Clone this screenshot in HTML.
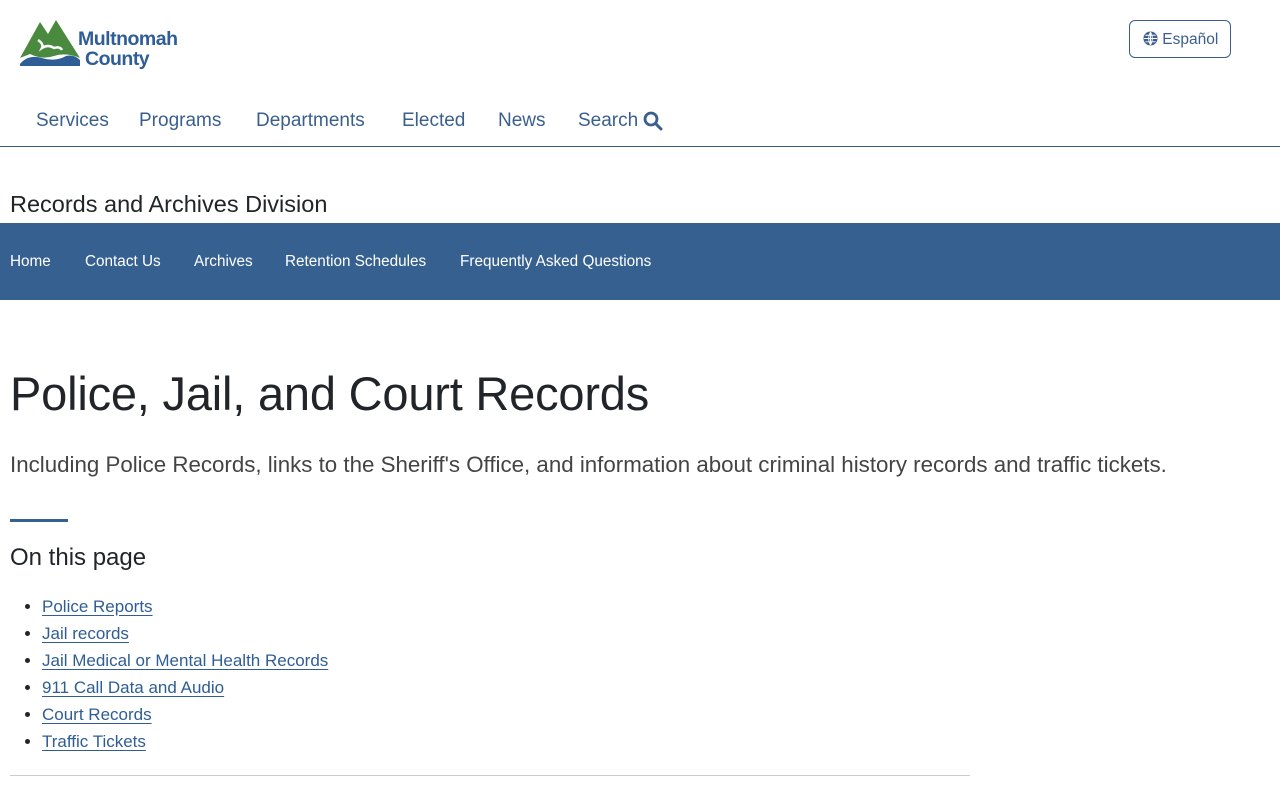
<!DOCTYPE html>
<html><head><meta charset="utf-8"><style>
*{margin:0;padding:0;box-sizing:border-box}
body{width:1280px;height:800px;overflow:hidden;background:#fff;font-family:"Liberation Sans",sans-serif;color:#212529;position:relative}
.abs{position:absolute;white-space:nowrap}
.nav a{position:absolute;top:110px;font-size:19px;line-height:22px;color:#3a5f8f;text-decoration:none;display:flex;align-items:center;gap:5px}
.bar{position:absolute;left:0;top:223px;width:1280px;height:77px;background:#356090}
.bar span{position:absolute;top:30px;color:#fff;font-size:15.3px}
ul{position:absolute;left:42px;top:597px;list-style:disc}
li{height:27px;font-size:17px}
li a{color:#2f5d95;text-decoration:underline;text-underline-offset:3px}
li::marker{color:#212529}
</style></head><body>
<svg class="abs" style="left:18px;top:18px" width="66" height="50" viewBox="0 0 66 50">
<path d="M2 40 L22 4 L30 16 L38 2 L62 40 Q48 34 36 38 Q24 42 12 36 Z" fill="#4a8a3f"/>
<path d="M20 22 Q26 26 24 30 Q30 26 36 30 Q42 28 44 32" stroke="#fff" stroke-width="2.5" fill="none"/>
<path d="M2 46 Q10 36 24 40 Q38 44 48 38 Q56 36 62 42 L62 48 L2 48 Z" fill="#2f5d95"/>
</svg>
<div class="abs" style="left:78px;top:29px;font-size:19.5px;font-weight:bold;color:#2f5d95;letter-spacing:-0.5px;line-height:20px">Multnomah</div>
<div class="abs" style="left:85px;top:49px;font-size:19.5px;font-weight:bold;color:#2f5d95;letter-spacing:-0.5px;line-height:20px">County</div>
<div class="abs" style="left:1129px;top:20px;width:102px;height:38px;border:1px solid #3a5f8f;border-radius:6px;color:#3a5f8f;font-size:15.5px;padding:10px 0 0 13px">
<svg width="15" height="15" viewBox="0 0 16 16" style="vertical-align:-2px"><circle cx="8" cy="8" r="7.5" fill="#3a5f8f"/><path d="M1 8H15M8 1V15M2.5 4.5H13.5M2.5 11.5H13.5M8 1Q4 8 8 15M8 1Q12 8 8 15" stroke="#fff" stroke-width="1" fill="none"/></svg> Español</div>
<div class="nav">
<a style="left:36px">Services</a><a style="left:139px">Programs</a><a style="left:256px">Departments</a><a style="left:402px">Elected</a><a style="left:498px">News</a><a style="left:578px">Search <svg width="20" height="20" viewBox="0 0 20 20"><circle cx="8" cy="8" r="6" stroke="#3a5f8f" stroke-width="2.8" fill="none"/><path d="M12.5 12.5L18 18" stroke="#3a5f8f" stroke-width="3" stroke-linecap="round"/></svg></a>
</div>
<div class="abs" style="left:0;top:146px;width:1280px;height:1px;background:#375d8a"></div>
<div class="abs" style="left:10px;top:191px;font-size:23.5px">Records and Archives Division</div>
<div class="bar"><span style="left:10px">Home</span><span style="left:85px">Contact Us</span><span style="left:194px">Archives</span><span style="left:285px">Retention Schedules</span><span style="left:460px">Frequently Asked Questions</span></div>
<div class="abs" style="left:10px;top:366px;font-size:47px;letter-spacing:-0.2px">Police, Jail, and Court Records</div>
<div class="abs" style="left:10px;top:452px;font-size:22.3px;color:#444;letter-spacing:0px">Including Police Records, links to the Sheriff's Office, and information about criminal history records and traffic tickets.</div>
<div class="abs" style="left:10px;top:519px;width:58px;height:3px;background:#356090"></div>
<div class="abs" style="left:10px;top:544px;font-size:24px">On this page</div>
<ul>
<li><a>Police Reports</a></li><li><a>Jail records</a></li><li><a>Jail Medical or Mental Health Records</a></li><li><a>911 Call Data and Audio</a></li><li><a>Court Records</a></li><li><a>Traffic Tickets</a></li>
</ul>
<div class="abs" style="left:10px;top:775px;width:960px;height:1px;background:#ccc"></div>
</body></html>
